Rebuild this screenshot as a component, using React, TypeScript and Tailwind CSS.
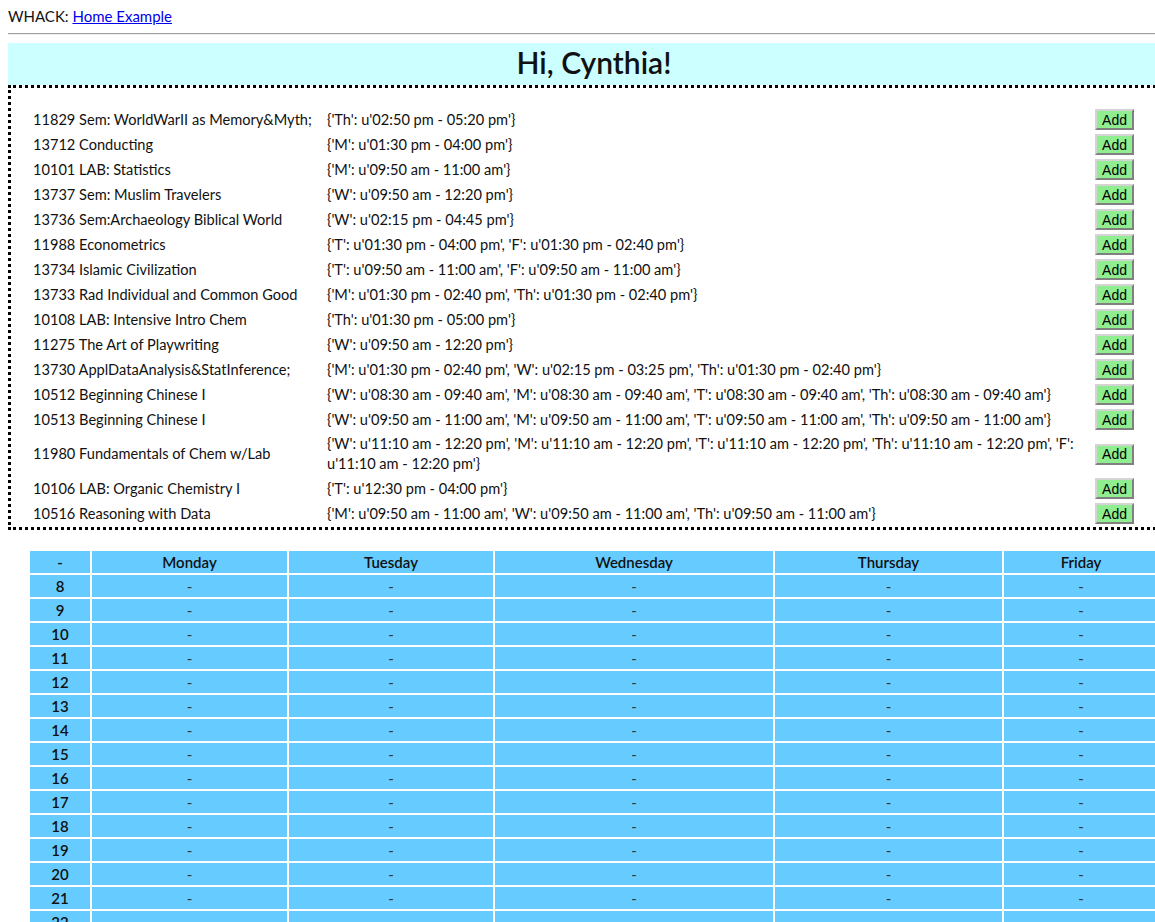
import React from 'react';

interface Course {
    code: string;
    name: string;
    times: string;
}

const courses: Course[] = [
    { code: '11829', name: 'Sem: WorldWarII as Memory&Myth;', times: "{'Th': u'02:50 pm - 05:20 pm'}" },
    { code: '13712', name: 'Conducting', times: "{'M': u'01:30 pm - 04:00 pm'}" },
    { code: '10101', name: 'LAB: Statistics', times: "{'M': u'09:50 am - 11:00 am'}" },
    { code: '13737', name: 'Sem: Muslim Travelers', times: "{'W': u'09:50 am - 12:20 pm'}" },
    { code: '13736', name: 'Sem:Archaeology Biblical World', times: "{'W': u'02:15 pm - 04:45 pm'}" },
    { code: '11988', name: 'Econometrics', times: "{'T': u'01:30 pm - 04:00 pm', 'F': u'01:30 pm - 02:40 pm'}" },
    { code: '13734', name: 'Islamic Civilization', times: "{'T': u'09:50 am - 11:00 am', 'F': u'09:50 am - 11:00 am'}" },
    { code: '13733', name: 'Rad Individual and Common Good', times: "{'M': u'01:30 pm - 02:40 pm', 'Th': u'01:30 pm - 02:40 pm'}" },
    { code: '10108', name: 'LAB: Intensive Intro Chem', times: "{'Th': u'01:30 pm - 05:00 pm'}" },
    { code: '11275', name: 'The Art of Playwriting', times: "{'W': u'09:50 am - 12:20 pm'}" },
    { code: '13730', name: 'ApplDataAnalysis&StatInference;', times: "{'M': u'01:30 pm - 02:40 pm', 'W': u'02:15 pm - 03:25 pm', 'Th': u'01:30 pm - 02:40 pm'}" },
    { code: '10512', name: 'Beginning Chinese I', times: "{'W': u'08:30 am - 09:40 am', 'M': u'08:30 am - 09:40 am', 'T': u'08:30 am - 09:40 am', 'Th': u'08:30 am - 09:40 am'}" },
    { code: '10513', name: 'Beginning Chinese I', times: "{'W': u'09:50 am - 11:00 am', 'M': u'09:50 am - 11:00 am', 'T': u'09:50 am - 11:00 am', 'Th': u'09:50 am - 11:00 am'}" },
    { code: '11980', name: 'Fundamentals of Chem w/Lab', times: "{'W': u'11:10 am - 12:20 pm', 'M': u'11:10 am - 12:20 pm', 'T': u'11:10 am - 12:20 pm', 'Th': u'11:10 am - 12:20 pm', 'F': u'11:10 am - 12:20 pm'}" },
    { code: '10106', name: 'LAB: Organic Chemistry I', times: "{'T': u'12:30 pm - 04:00 pm'}" },
    { code: '10516', name: 'Reasoning with Data', times: "{'M': u'09:50 am - 11:00 am', 'W': u'09:50 am - 11:00 am', 'Th': u'09:50 am - 11:00 am'}" },
];

const days = ['Monday', 'Tuesday', 'Wednesday', 'Thursday', 'Friday'];
const dayWidths = ['w-[195px]', 'w-[204px]', 'w-[278px]', 'w-[227px]', 'w-[154px]'];
const hours = [8, 9, 10, 11, 12, 13, 14, 15, 16, 17, 18, 19, 20, 21, 22, 23];

const App: React.FC = () => {
    return (
        <div className="w-[1155px] h-[922px] overflow-hidden bg-white text-[#111] font-['Lato','Noto_Sans',sans-serif] text-[14.6px]">
            <div className="w-[1188px] pl-[8px] pt-[8px]">
                <div className="leading-[17px] h-[17px] text-[15px]">
                    WHACK: <a href="#" className="text-[#0000ee] underline">Home Example</a>
                </div>
                <div className="mt-[8px] w-[1147px] border-t border-t-[#a0a0a0] border-b border-b-[#eeeeee]" />

                {/* Greeting */}
                <div className="mt-[8px] w-[1172px] h-[42px] bg-[#ccffff] flex items-center justify-center text-[30px] font-semibold leading-none pb-[5px]">
                    Hi, Cynthia!
                </div>

                {/* Course list */}
                <div className="w-[1172px] border-[3px] border-dotted border-black pt-[19px] pb-[1px]">
                    <div className="ml-[22px] w-[1101px]">
                        {courses.map((c) => (
                            <div key={c.code + c.times} className="grid grid-cols-[294px_1fr_auto] items-center min-h-[25px] py-[2px] leading-[20px]">
                                <div className="whitespace-nowrap">{c.code} {c.name}</div>
                                <div className="pr-[2px]">{c.times}</div>
                                <button className="bg-[#90ee90] border-2 border-[#d4d4d4] border-r-[#808080] border-b-[#808080] px-[5px] h-[21px] leading-[16px] text-[14px] text-black font-['Liberation_Sans',Arial,sans-serif]">
                                    Add
                                </button>
                            </div>
                        ))}
                    </div>
                </div>

                {/* Weekly schedule */}
                <table className="mt-[19px] ml-[20px] border-separate border-spacing-[2px] text-[15px] leading-[22px]">
                    <thead>
                        <tr>
                            <th className="w-[60px] h-[22px] bg-[#66ccff] font-semibold p-0">-</th>
                            {days.map((d, i) => (
                                <th key={d} className={`${dayWidths[i]} h-[22px] bg-[#66ccff] font-semibold p-0`}>{d}</th>
                            ))}
                        </tr>
                    </thead>
                    <tbody>
                        {hours.map((h) => (
                            <tr key={h}>
                                <th className="h-[22px] bg-[#66ccff] font-semibold p-0">{h}</th>
                                {days.map((d) => (
                                    <td key={d} className="h-[22px] bg-[#66ccff] text-center text-[#333] p-0">-</td>
                                ))}
                            </tr>
                        ))}
                    </tbody>
                </table>
            </div>
        </div>
    );
};

export default App;
